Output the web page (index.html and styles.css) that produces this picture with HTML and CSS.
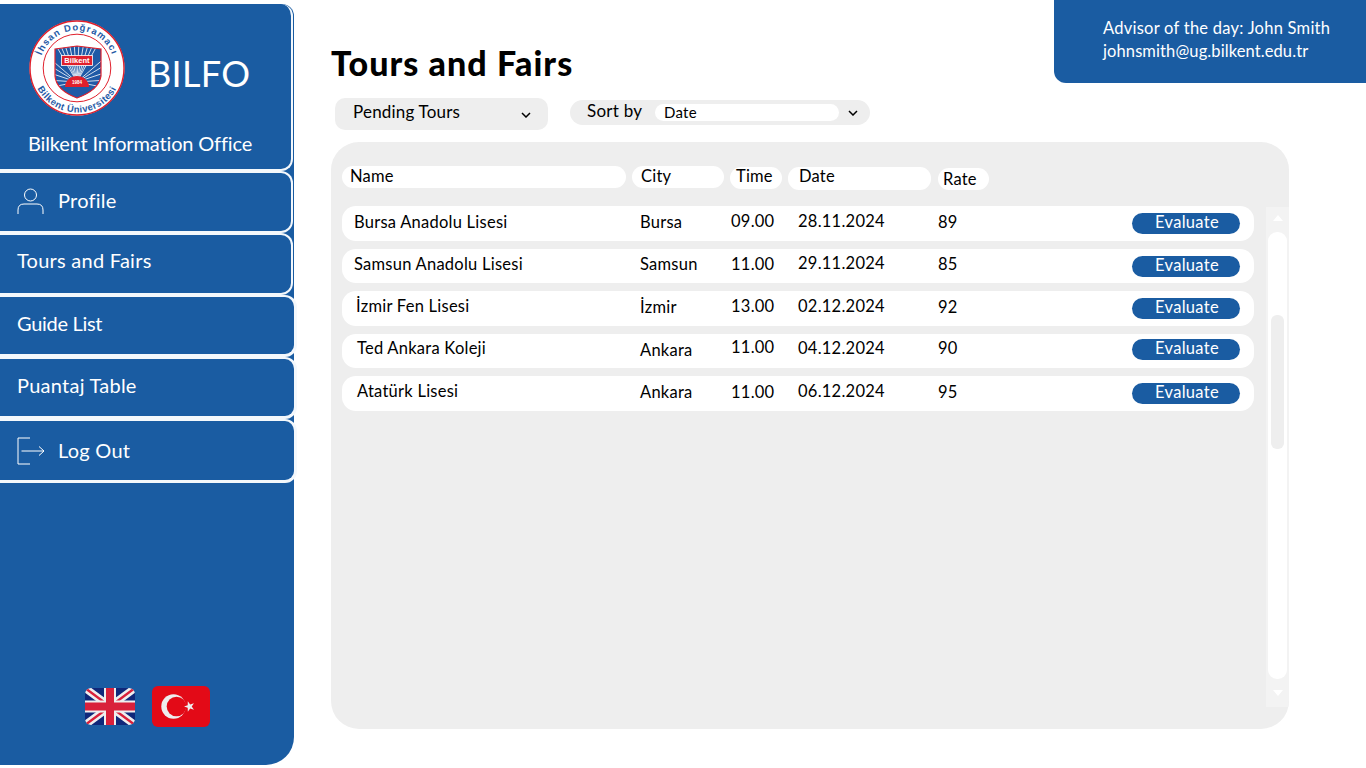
FILE: index.html
```html
<!DOCTYPE html>
<html lang="en">
<head>
<meta charset="utf-8">
<title>Tours and Fairs</title>
<link rel="stylesheet" href="styles.css">
</head>
<body>
<aside class="sidebar">
  <div class="brand nav-card">
    <div class="brand-top">
      <svg class="logo" viewBox="0 0 96 96" aria-label="Bilkent University logo">
        <defs>
          <clipPath id="shield-clip"><path d="M26 29 L48 26 L72 29 L72 56 Q70 70 48 78 Q27 70 26 56Z"/></clipPath>
          <path id="arc-top" d="M10.500 48 A37.500 37.500 0 0 1 85.500 48"/>
          <path id="arc-bottom" d="M3.500 48 A44.500 44.500 0 0 0 92.500 48"/>
        </defs>
        <circle cx="48" cy="48" r="47.500" fill="#fff"/>
        <circle cx="48" cy="48" r="47" fill="none" stroke="#e0202c" stroke-width="1.400"/>
        <circle cx="48" cy="48" r="33.800" fill="none" stroke="#e0202c" stroke-width="1"/>
        <text class="logo-arc logo-arc-top"><textPath href="#arc-top" startOffset="50%" text-anchor="middle">İhsan Doğramacı</textPath></text>
        <text class="logo-arc"><textPath href="#arc-bottom" startOffset="50%" text-anchor="middle">Bilkent Üniversitesi</textPath></text>
        <path d="M26 29 L48 26 L72 29 L72 56 Q70 70 48 78 Q27 70 26 56Z" fill="#1f5aa6"/>
        <g clip-path="url(#shield-clip)">
          <g stroke="#fff" stroke-width=".8">
            <path d="M48 62 L25 22M48 62 L30 22M48 62 L35 22M48 62 L40 22M48 62 L45 22M48 62 L50 22M48 62 L55 22M48 62 L60 22M48 62 L65 22M48 62 L70 22"/>
            <path d="M48 62 L18 36M48 62 L18 44M48 62 L18 52M48 62 L18 60M48 62 L18 68M48 62 L78 36M48 62 L78 44M48 62 L78 52M48 62 L78 60M48 62 L78 68"/>
            <path d="M48 62 L28 84M48 62 L38 84M48 62 L58 84M48 62 L68 84"/>
          </g>
          <path d="M36 67 A12 11 0 0 1 60 67Z" fill="#e0202c"/>
          <path d="M30 67 H66 V80 H30Z" fill="#1f5aa6"/>
        </g>
        <path d="M26 29 L48 26 L72 29 L72 56 Q70 70 48 78 Q27 70 26 56Z" fill="none" stroke="#e0202c" stroke-width="1.200"/>
        <rect x="32.500" y="35.500" width="31" height="10" fill="#e0202c" stroke="#fff" stroke-width=".8"/>
        <text class="logo-name" x="48" y="43.400" text-anchor="middle">Bilkent</text>
        <text class="logo-year" x="48" y="64" text-anchor="middle">1984</text>
      </svg>
      <span class="brand-name">BILFO</span>
    </div>
    <div class="brand-sub">Bilkent Information Office</div>
  </div>

  <a class="nav-card nav-item nav-short">
    <svg class="nav-icon" viewBox="0 0 28 28" fill="none" stroke="#fff" stroke-width="1">
      <circle cx="13.500" cy="7" r="6"/>
      <path d="M1 26 V22 Q1 16 7 16 H20 Q26 16 26 22 V26"/>
    </svg>
    <span class="nav-text nav-text-profile">Profile</span>
  </a>
  <a class="nav-card nav-item nav-short"><span class="nav-text nav-text-tours">Tours and Fairs</span></a>
  <a class="nav-card nav-item nav-wide"><span class="nav-text nav-text-guide">Guide List</span></a>
  <a class="nav-card nav-item nav-wide"><span class="nav-text">Puantaj Table</span></a>
  <a class="nav-card nav-item nav-wide nav-logout">
    <svg class="nav-icon" viewBox="0 0 28 28" fill="none" stroke="#fff" stroke-width="1">
      <path d="M13 1 H1 V27 H13"/>
      <path d="M4.500 14 H27 M22 9.500 L27 14 L22 18.500"/>
    </svg>
    <span class="nav-text nav-text-logout">Log Out</span>
  </a>

  <div class="flags">
    <svg class="flag-uk" viewBox="0 0 50 37" aria-label="English">
      <defs><clipPath id="uk-clip"><rect width="50" height="37" rx="6"/></clipPath></defs>
      <g clip-path="url(#uk-clip)">
        <rect width="50" height="37" fill="#10287a"/>
        <path d="M0 0 L50 37 M50 0 L0 37" stroke="#eee" stroke-width="7.500"/>
        <path d="M0 0 L50 37 M50 0 L0 37" stroke="#d9203a" stroke-width="2.400"/>
        <path d="M25 0 V37 M0 18.500 H50" stroke="#eee" stroke-width="12"/>
        <path d="M25 0 V37 M0 18.500 H50" stroke="#d9203a" stroke-width="8"/>
      </g>
    </svg>
    <svg class="flag-tr" viewBox="0 0 58 41" aria-label="Türkçe">
      <rect width="58" height="41" rx="6" fill="#e30a17"/>
      <circle cx="21.500" cy="20.500" r="12.200" fill="#eee"/>
      <circle cx="24.500" cy="20.500" r="9.800" fill="#e30a17"/>
      <path d="M32 20.500 L35.720 19.210 L35.800 15.270 L38.180 18.410 L41.950 17.270 L39.700 20.500 L41.950 23.730 L38.180 22.590 L35.800 25.730 L35.720 21.790Z" fill="#eee"/>
    </svg>
  </div>
</aside>

<main class="main">
  <header class="head">
    <h1 class="title">Tours and Fairs</h1>
    <div class="advisor">
      <div>Advisor of the day: John Smith</div>
      <div class="advisor-mail">johnsmith@ug.bilkent.edu.tr</div>
    </div>
  </header>

  <div class="filters">
    <div class="status-select">
      <span>Pending Tours</span>
      <svg class="chevron" viewBox="0 0 10 6"><path d="M1 1 L5 5 L9 1"/></svg>
    </div>
    <div class="sort-select">
      <span class="sort-label">Sort by</span>
      <span class="sort-value">Date</span>
      <svg class="chevron" viewBox="0 0 10 6"><path d="M1 1 L5 5 L9 1"/></svg>
    </div>
  </div>

  <section class="panel">
    <div class="table">
      <div class="table-head">
        <div class="pill pill-name">Name</div>
        <div class="pill pill-city">City</div>
        <div class="pill pill-time">Time</div>
        <div class="pill pill-date">Date</div>
        <div class="pill pill-rate">Rate</div>
      </div>
      <div class="rows">
        <div class="row">
          <span class="lift-1">Bursa Anadolu Lisesi</span><span class="lift-1">Bursa</span><span class="lift-2">09.00</span><span class="lift-2">28.11.2024</span><span class="lift-1">89</span>
          <button class="evaluate">Evaluate</button>
        </div>
        <div class="row">
          <span class="lift-2">Samsun Anadolu Lisesi</span><span class="lift-2">Samsun</span><span class="lift-2">11.00</span><span class="lift-3">29.11.2024</span><span class="lift-2">85</span>
          <button class="evaluate drop-1">Evaluate</button>
        </div>
        <div class="row">
          <span class="lift-2 indent-2">İzmir Fen Lisesi</span><span class="lift-1">İzmir</span><span class="lift-2">13.00</span><span class="lift-2">02.12.2024</span><span class="lift-1">92</span>
          <button class="evaluate">Evaluate</button>
        </div>
        <div class="row">
          <span class="lift-3 indent-3">Ted Ankara Koleji</span><span class="lift-1">Ankara</span><span class="lift-4">11.00</span><span class="lift-3">04.12.2024</span><span class="lift-3">90</span>
          <button class="evaluate lift-1">Evaluate</button>
        </div>
        <div class="row">
          <span class="lift-2 indent-3">Atatürk Lisesi</span><span class="lift-1">Ankara</span><span class="lift-1">11.00</span><span class="lift-2">06.12.2024</span><span class="lift-1">95</span>
          <button class="evaluate">Evaluate</button>
        </div>
      </div>
    </div>
    <div class="scrollbar">
      <span class="arrow arrow-up"></span>
      <div class="scroll-track"><div class="scroll-thumb"></div></div>
      <span class="arrow arrow-down"></span>
    </div>
  </section>
</main>
</body>
</html>
```
FILE: styles.css
```css
* { box-sizing: border-box; }

html, body { margin: 0; height: 768px; overflow: hidden; }

body {
  display: grid;
  grid-template-columns: 294px 1fr;
  background: #fff;
  color: #000;
  font-family: "Lato", "Open Sans", sans-serif;
}

.sidebar {
  display: flex;
  flex-direction: column;
  height: 761px;
  margin-top: 4px;
  background: #1a5ca2;
  border-radius: 0 12px 28px 0;
  color: #fff;
}

.nav-card {
  border: 2px solid #f4f8fc;
  border-left: 0;
  border-radius: 0 12px 12px 0;
  background: #1a5ca2;
}

.brand {
  width: 293px;
  height: 167px;
  flex: none;
  border-top: 0;
  padding: 16px 0 0 29px;
}

.brand-top { display: flex; align-items: center; }
.logo { width: 96px; height: 96px; flex: none; }
.logo-arc { font: 700 9.400px "Liberation Sans", sans-serif; letter-spacing: .5px; fill: #1f5aa6; }
.logo-arc-top { letter-spacing: 1.100px; }
.logo-name { font: 700 7.600px "Liberation Sans", sans-serif; fill: #fff; }
.logo-year { font: 700 4.500px "Liberation Sans", sans-serif; fill: #fff; }
.brand-name { margin: 10px 0 0 23px; font-size: 36px; line-height: 1; letter-spacing: .3px; }
.brand-sub { margin: 15px 0 0 -1px; font-size: 20px; line-height: 24px; letter-spacing: -.15px; white-space: nowrap; }

.nav-item {
  display: flex;
  align-items: center;
  gap: 13px;
  flex: none;
  height: 62px;
  padding-left: 17px;
  font-size: 20px;
  letter-spacing: .25px;
}
.nav-short { width: 293px; }
.nav-wide { width: 297px; border-right-width: 3px; border-bottom-width: 3px; }
.nav-logout { height: 64px; }
.nav-icon { width: 28px; height: 28px; flex: none; }
.nav-text { margin-bottom: 6px; }
.nav-text-profile { margin-bottom: 4px; }
.nav-text-tours { margin-bottom: 8px; }
.nav-text-guide { margin-bottom: 6px; letter-spacing: -.3px; }
.nav-text-logout { margin-bottom: 2px; }

.flags {
  display: flex;
  align-items: center;
  gap: 17px;
  margin-top: auto;
  padding: 0 0 38px 85px;
}
.flag-uk { width: 50px; height: 37px; display: block; }
.flag-tr { width: 58px; height: 41px; display: block; }

.main { min-width: 0; padding-left: 37px; }

.head { display: flex; align-items: flex-start; height: 83px; }
.title {
  margin: 42px 0 0;
  font-size: 34px;
  line-height: 41px;
  font-weight: 900;
  letter-spacing: 1.050px;
}
.advisor {
  width: 312px;
  height: 83px;
  margin-left: auto;
  padding: 17px 0 0 49px;
  background: #1a5ca2;
  border-radius: 0 0 0 12px;
  color: #fff;
  font-size: 16.500px;
  line-height: 23px;
  letter-spacing: .25px;
}
.advisor-mail { letter-spacing: .1px; }

.filters { display: flex; align-items: flex-start; gap: 22px; margin: 15px 0 0 4px; }
.status-select {
  display: flex;
  align-items: center;
  justify-content: space-between;
  width: 213px;
  height: 32px;
  padding: 0 17px 0 18px;
  background: #eee;
  border-radius: 10px;
  font-size: 17px;
  letter-spacing: .2px;
}
.status-select span { margin-bottom: 6px; }
.status-select .chevron { margin-top: 2px; }
.sort-select {
  display: flex;
  align-items: center;
  width: 300px;
  height: 25px;
  margin-top: 2px;
  padding-left: 17px;
  background: #eee;
  border-radius: 13px;
  font-size: 17px;
  letter-spacing: .25px;
}
.sort-label { width: 68px; margin-bottom: 5px; }
.sort-value {
  width: 184px;
  height: 17px;
  padding-left: 9px;
  background: #fff;
  border-radius: 9px;
  font-size: 15px;
  line-height: 16px;
}
.chevron { width: 10px; height: 6px; margin-left: 9px; fill: none; stroke: #000; stroke-width: 1.500; flex: none; }

.panel {
  display: flex;
  align-items: flex-start;
  width: 958px;
  height: 587px;
  margin-top: 12px;
  padding: 24px 0 0 11px;
  background: #eee;
  border-radius: 28px;
  overflow: hidden;
}
.table { width: 912px; flex: none; }
.table-head { display: flex; align-items: flex-start; gap: 6px; height: 40px; font-size: 16.500px; }
.pill { height: 22px; background: #fff; border-radius: 11px; line-height: 20px; letter-spacing: .2px; }
.pill-name { width: 284px; padding-left: 8px; }
.pill-city { width: 92px; padding-left: 9px; }
.pill-time { width: 52px; padding-left: 6px; margin-top: 1px; line-height: 18px; }
.pill-date { width: 143px; padding-left: 11px; margin-top: 1px; height: 23px; line-height: 18px; }
.pill-rate { width: 51px; padding-left: 5px; margin: 2px 0 0 1px; line-height: 22px; }

.rows { display: flex; flex-direction: column; gap: 8px; }
.row {
  display: grid;
  grid-template-columns: 286px 91px 67px 140px 194px 108px;
  align-items: center;
  height: 34.500px;
  padding-left: 12px;
  background: #fff;
  border-radius: 14px;
  font-size: 16.500px;
  letter-spacing: .25px;
  white-space: nowrap;
}
.lift-1 { margin-bottom: 2px; }
.lift-2 { margin-bottom: 4px; }
.lift-3 { margin-bottom: 6px; }
.lift-4 { margin-bottom: 8px; }
.drop-1 { margin-top: 2px; }
.indent-2 { padding-left: 2px; }
.indent-3 { padding-left: 3px; }

.evaluate {
  width: 108px;
  height: 21px;
  padding: 0 0 3px 2px;
  border: 0;
  border-radius: 11px;
  background: #1a5ca2;
  color: #fff;
  font: 400 16.500px/18px "Lato", sans-serif;
  letter-spacing: .3px;
}

.scrollbar {
  display: flex;
  flex-direction: column;
  align-items: center;
  width: 23px;
  height: 500px;
  margin: 41px 0 0 12px;
  padding-top: 8px;
  background: #f3f3f3;
}
.arrow { width: 0; height: 0; border-left: 5px solid transparent; border-right: 5px solid transparent; }
.arrow-up { border-bottom: 6px solid #fff; }
.arrow-down { border-top: 6px solid #fff; margin-top: 11px; }
.scroll-track {
  width: 19px;
  height: 447px;
  margin-top: 11px;
  padding: 83px 3px 0;
  background: #fff;
  border-radius: 9px;
}
.scroll-thumb { height: 134px; background: #eee; border-radius: 6px; }
```
